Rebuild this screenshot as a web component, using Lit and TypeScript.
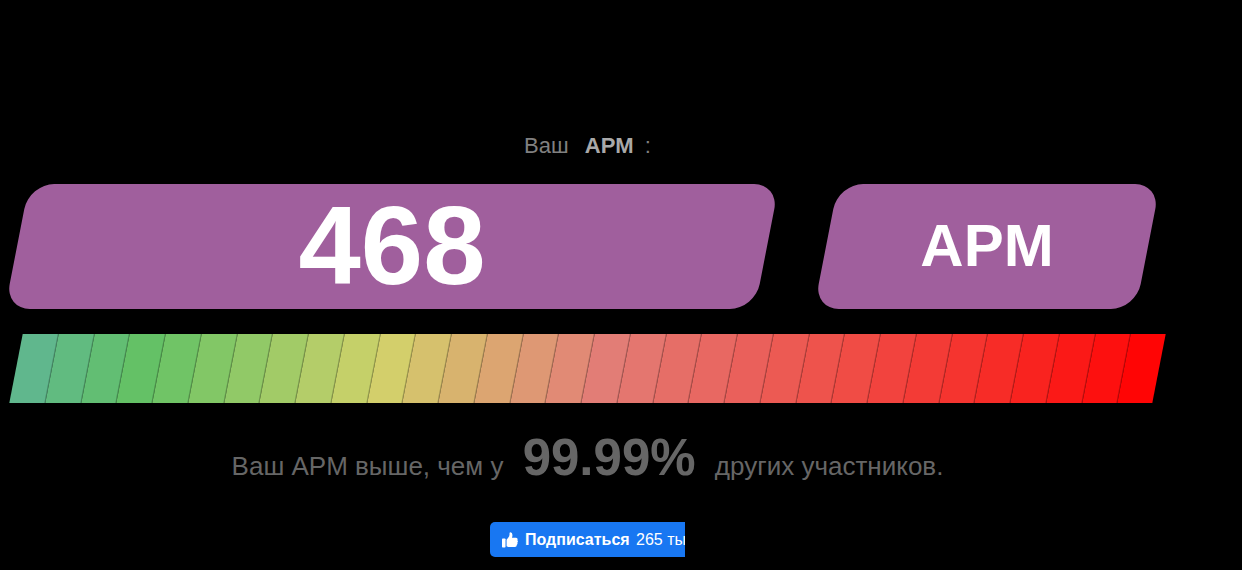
import { LitElement, html, css } from "lit";
import { customElement, property } from "lit/decorators.js";
import { styleMap } from "lit/directives/style-map.js";

const SCALE = [
  "#60b78d", "#61bb80", "#62be73", "#64c166", "#70c466", "#82c766", "#91c967", "#a2cb67",
  "#b4cd69", "#c5d069", "#d3cf6b", "#d6c16d", "#d8b36e", "#dca571", "#de9874", "#e18a75",
  "#e27d76", "#e4766f", "#e66e67", "#e86862", "#ea605b", "#ec5a53", "#ee534c", "#f04c45",
  "#f2433e", "#f33b36", "#f5342f", "#f72c27", "#f9231f", "#fb1917", "#fd100f", "#ff0505",
];

@customElement("apm-scale")
export class ApmScale extends LitElement {
  @property({ attribute: false }) colors: string[] = [];

  static styles = css`
    :host {
      display: block;
    }
    .scale {
      display: flex;
      height: 69px;
      transform: skewX(-11deg);
    }
    .step {
      flex: 1 1 0;
      box-sizing: border-box;
      border-right: 1px solid rgba(0, 0, 0, 0.25);
    }
    .step:last-child {
      border-right: none;
    }
  `;

  render() {
    return html`<div class="scale">
      ${this.colors.map((c) => html`<div class="step" style=${styleMap({ backgroundColor: c })}></div>`)}
    </div>`;
  }
}

@customElement("app-root")
export class AppRoot extends LitElement {
  static styles = css`
    :host {
      display: block;
      box-sizing: border-box;
      min-height: 100vh;
      padding: 131px 67px 13px 0;
      background: #000;
      color: #666;
      font-family: "Liberation Sans", Arial, sans-serif;
      text-align: center;
    }
    .title {
      margin: 0;
      font-size: 22px;
      line-height: 30px;
      font-weight: 400;
      color: #808080;
    }
    .title strong {
      margin: 0 5px 0 10px;
      color: #a9a9a9;
    }
    .cards {
      display: grid;
      grid-template-columns: 750fr 322fr;
      column-gap: 59px;
      margin: 23px 27px 25px 17px;
    }
    .card {
      position: relative;
      isolation: isolate;
      box-sizing: border-box;
      display: flex;
      align-items: center;
      justify-content: center;
      height: 125px;
      padding-bottom: 2px;
      color: #fff;
      font-weight: 700;
      line-height: 124px;
    }
    .card::before {
      content: "";
      position: absolute;
      inset: 0;
      z-index: -1;
      border-radius: 25px;
      background: #a05f9d;
      transform: skewX(-11deg);
    }
    .value {
      font-size: 112px;
    }
    .unit {
      font-size: 60px;
    }
    .bar {
      margin: 0 16px;
    }
    .summary {
      margin: 25px 0 26px;
      font-size: 26px;
      line-height: 60px;
    }
    .summary strong {
      margin: 0 12px;
      font-size: 51px;
    }
    .social {
      display: flex;
      width: 195px;
      margin: 0 auto;
      overflow: hidden;
    }
    .follow {
      display: flex;
      flex: none;
      align-items: center;
      gap: 7px;
      height: 35px;
      padding: 0 12px;
      border: 0;
      border-radius: 5px;
      background: #1877f2;
      color: #fff;
      font: 16px/20px "Liberation Sans", Arial, sans-serif;
      white-space: nowrap;
      cursor: pointer;
    }
    .follow b {
      margin-right: 2px;
    }
    .thumb {
      width: 16px;
      height: 16px;
      fill: currentColor;
    }
  `;

  render() {
    return html`
      <h1 class="title">Ваш <strong>APM</strong> :</h1>
      <div class="cards">
        <div class="card value">468</div>
        <div class="card unit">APM</div>
      </div>
      <apm-scale class="bar" .colors=${SCALE}></apm-scale>
      <p class="summary">Ваш APM выше, чем у <strong>99.99%</strong> других участников.</p>
      <div class="social">
        <button class="follow" type="button">
          <svg class="thumb" viewBox="0.5 0.5 16.4 16" aria-hidden="true">
            <path d="M1.3 7H3.3Q4.1 7 4.1 7.8V15.4Q4.1 16.2 3.3 16.2H1.3Q.5 16.2 .5 15.4V7.8Q.5 7 1.3 7Z" />
            <path
              d="M5.2 8.2Q7.8 6.3 8.2 3.2V1.5Q8.3 .6 9.1 .6Q11.2 .7 11.2 3.4Q11.2 5 10.7 6.2H14.9Q16.5 6.3 16.5 7.8Q16.5 8.3 16.2 8.7Q16.9 9.2 16.8 10.1Q16.7 10.9 16.1 11.3Q16.6 11.9 16.3 12.6Q16.1 13.3 15.5 13.6Q15.9 15.6 13.8 15.8H9.5Q7.3 15.8 5.2 14.8Z"
            />
          </svg>
          <span><b>Подписаться</b> 265 тыс.</span>
        </button>
      </div>
    `;
  }
}
